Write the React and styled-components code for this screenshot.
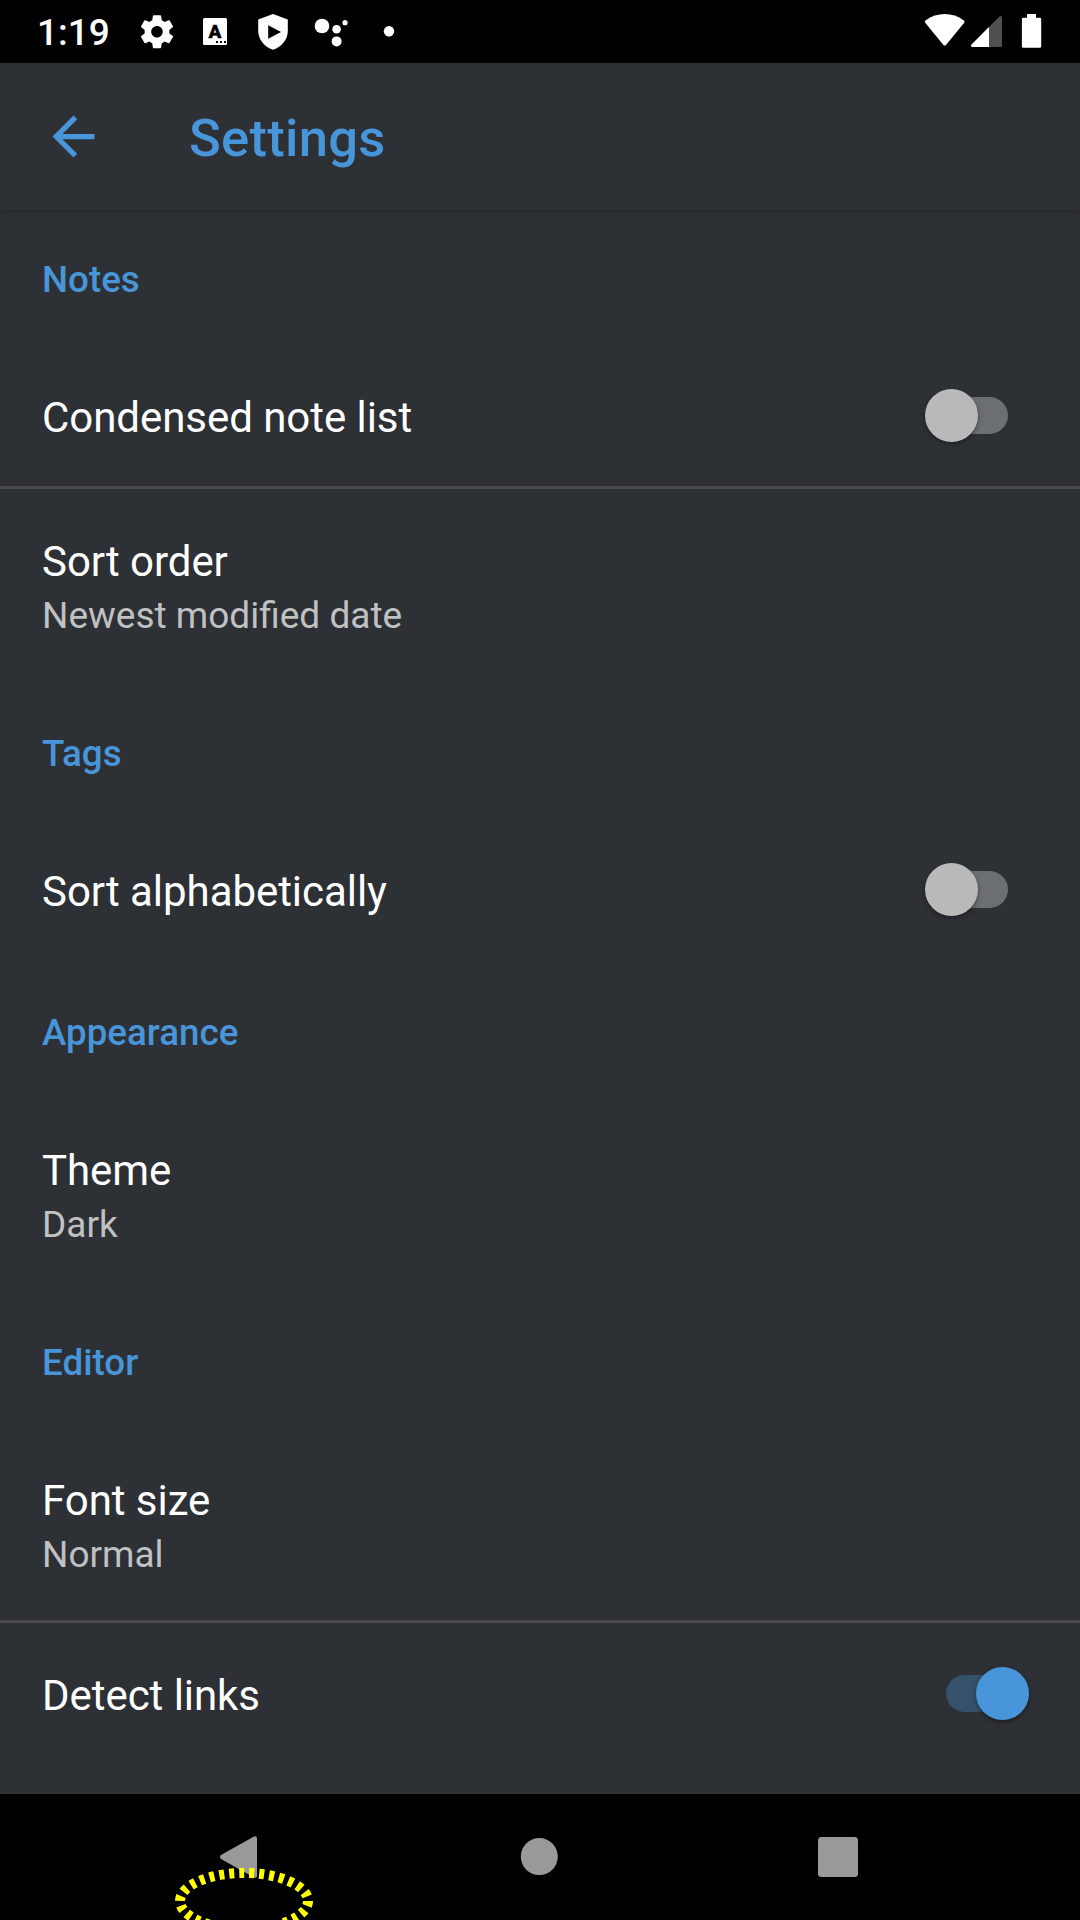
import React from "react";
import styled, { createGlobalStyle } from "styled-components";

const GlobalStyle = createGlobalStyle`
  *, *::before, *::after { box-sizing: border-box; }
  body {
    margin: 0;
    background: #000;
    overflow: hidden;
    font-family: Roboto, "Noto Sans", sans-serif;
  }
`;

const Screen = styled.div`
  position: relative;
  display: flex;
  flex-direction: column;
  width: 1080px;
  height: 1920px;
  overflow: hidden;
  background: #2d3035;
`;

const StatusBar = styled.header`
  flex: none;
  display: flex;
  height: 63px;
  background: #000;
  color: #fff;
`;

const Clock = styled.time`
  width: 128px;
  padding-left: 37px;
  font-size: 37px;
  font-weight: 500;
  line-height: 66px;
  white-space: nowrap;
`;

const StatusSlot = styled.svg`
  flex: none;
  display: block;
  width: ${(p) => p.$width || 58}px;
  height: 63px;
  fill: #fff;
`;

const SystemIcons = styled.div`
  display: flex;
  margin-left: auto;
  padding-right: 34px;
`;

const Toolbar = styled.div`
  flex: none;
  z-index: 1;
  display: flex;
  align-items: center;
  height: 147px;
  padding-left: 42px;
  background: #2d3035;
  box-shadow: 0 1px 5px rgba(0, 0, 0, 0.22);
`;

const BackArrow = styled.svg`
  width: 63px;
  height: 63px;
  fill: #4895d9;
`;

const Title = styled.h1`
  margin: 2px 0 0 84px;
  color: #4895d9;
  font-size: 52.5px;
  font-weight: 500;
  letter-spacing: 0.3px;
  line-height: 62px;
`;

const Preferences = styled.main`
  flex: 1;
  min-height: 0;
  overflow: hidden;
`;

const Category = styled.h2`
  height: 135px;
  margin: 0;
  padding: 4px 42px 0;
  color: #4895d9;
  font-size: 36.75px;
  font-weight: 500;
  line-height: 131px;
`;

const Row = styled.div`
  display: flex;
  align-items: center;
  height: ${(p) => (p.$tall ? 195 : 144)}px;
  padding: 0 51px 0 42px;
  border-bottom: 3px solid ${(p) => (p.$divider ? "#4a4b4f" : "transparent")};
`;

const RowText = styled.div`
  display: flex;
  flex-direction: column;
  flex: 1;
  gap: 8px;
  padding-top: 4px;
`;

const RowTitle = styled.div`
  color: #fff;
  font-size: 42px;
  letter-spacing: -0.05px;
  line-height: 49px;
`;

const RowSummary = styled.div`
  color: #c0c1c2;
  font-size: 37px;
  line-height: 43px;
`;

const SwitchBox = styled.div`
  display: flex;
  align-items: center;
  justify-content: ${(p) => (p.$on ? "flex-end" : "flex-start")};
  width: 104px;
  height: 53px;
`;

const Track = styled.div`
  flex: none;
  width: 62px;
  height: 37px;
  margin: ${(p) => (p.$on ? "0 -32px 0 0" : "0 0 0 -32px")};
  order: ${(p) => (p.$on ? 0 : 1)};
  border-radius: 19px;
  background: ${(p) => (p.$on ? "#36516a" : "#6b6f72")};
`;

const Thumb = styled.div`
  flex: none;
  z-index: 1;
  width: 53px;
  height: 53px;
  border-radius: 50%;
  order: ${(p) => (p.$on ? 1 : 0)};
  background: ${(p) => (p.$on ? "#4895d9" : "#b9b9b9")};
  box-shadow: 0 2px 4px rgba(0, 0, 0, 0.38);
`;

const NavBar = styled.nav`
  flex: none;
  display: flex;
  justify-content: center;
  height: 126px;
  background: #000;
`;

const NavIcon = styled.svg`
  width: 298px;
  height: 126px;
  fill: #999;
`;

const TouchMarker = styled.svg`
  position: absolute;
  left: 170px;
  bottom: 0;
  width: 148px;
  height: 60px;
  fill: none;
  stroke: #ff0;
  stroke-width: 10;
  stroke-dasharray: 5 5;
`;

const IconLetter = styled.text`
  font: 900 19px Roboto, sans-serif;
  fill: #000;
  stroke: #000;
  stroke-width: 0.3px;
  text-anchor: middle;
`;

function Switch({ on }) {
  return (
    <SwitchBox $on={on} role="switch" aria-checked={on}>
      <Track $on={on} />
      <Thumb $on={on} />
    </SwitchBox>
  );
}

function Preference({ title, summary, toggle, divider }) {
  return (
    <Row $tall={Boolean(summary)} $divider={divider}>
      <RowText>
        <RowTitle>{title}</RowTitle>
        {summary && <RowSummary>{summary}</RowSummary>}
      </RowText>
      {toggle !== undefined && <Switch on={toggle} />}
    </Row>
  );
}

const sections = [
  {
    name: "Notes",
    items: [
      { title: "Condensed note list", toggle: false, divider: true },
      { title: "Sort order", summary: "Newest modified date" },
    ],
  },
  { name: "Tags", items: [{ title: "Sort alphabetically", toggle: false }] },
  { name: "Appearance", items: [{ title: "Theme", summary: "Dark" }] },
  {
    name: "Editor",
    items: [
      { title: "Font size", summary: "Normal", divider: true },
      { title: "Detect links", toggle: true },
    ],
  },
];

export default function App() {
  return (
    <>
      <GlobalStyle />
      <Screen>
        <StatusBar>
          <Clock>1:19</Clock>
          <StatusSlot viewBox="0 0 58 63">
            <path
              transform="translate(9.2 11.9) scale(1.65)"
              d="M19.43 12.98c.04-.32.07-.64.07-.98s-.03-.66-.07-.98l2.11-1.65c.19-.15.24-.42.12-.64l-2-3.46c-.12-.22-.39-.3-.61-.22l-2.49 1c-.52-.4-1.08-.73-1.69-.98l-.38-2.65C14.46 2.18 14.25 2 14 2h-4c-.25 0-.46.18-.49.42l-.38 2.65c-.61.25-1.17.59-1.69.98l-2.49-1c-.23-.09-.49 0-.61.22l-2 3.46c-.13.22-.07.49.12.64l2.11 1.65c-.04.32-.07.65-.07.98s.03.66.07.98l-2.11 1.65c-.19.15-.24.42-.12.64l2 3.46c.12.22.39.3.61.22l2.49-1c.52.4 1.08.73 1.69.98l.38 2.65c.03.24.24.42.49.42h4c.25 0 .46-.18.49-.42l.38-2.65c.61-.25 1.17-.59 1.69-.98l2.49 1c.23.09.49 0 .61-.22l2-3.46c.12-.22.07-.49-.12-.64l-2.11-1.65zM12 15.5c-1.93 0-3.5-1.57-3.5-3.5s1.57-3.5 3.5-3.5 3.5 1.57 3.5 3.5-1.57 3.5-3.5 3.5z"
            />
          </StatusSlot>
          <StatusSlot viewBox="0 0 58 63">
            <rect x="17" y="18" width="24" height="27" rx="1.5" />
            <IconLetter x="29" y="38">A</IconLetter>
            <path fill="#000" d="M30 41h2v2h-2zM34 41h2v2h-2zM38 41h2v2h-2z" />
          </StatusSlot>
          <StatusSlot viewBox="0 0 58 63">
            <path d="M29 14L43.8 19.6V31C43.8 39 38 47 29 49.8C20 47 14.2 39 14.2 31V19.6Z" />
            <path fill="#000" d="M24.2 25.3L37 32L24.2 38.7Z" />
          </StatusSlot>
          <StatusSlot viewBox="0 0 58 63">
            <circle cx="20" cy="26" r="7.3" />
            <circle cx="34.6" cy="29.2" r="4.3" />
            <circle cx="43" cy="22.7" r="2.6" />
            <circle cx="34.6" cy="41.4" r="5" />
          </StatusSlot>
          <StatusSlot viewBox="0 0 58 63">
            <circle cx="29" cy="31.2" r="5.2" />
          </StatusSlot>
          <SystemIcons>
            <StatusSlot $width={46} viewBox="0 0 46 63">
              <path d="M1.2 22.8Q.2 21.5 1.5 20.4C13.4 12 28.2 12 39.9 20.4Q41.2 21.5 40.2 22.8L22.2 44.7Q20.7 46.5 19.2 44.7Z" />
            </StatusSlot>
            <StatusSlot $width={46} viewBox="0 0 46 63">
              <path
                fill="#505050"
                d="M2.5 47Q.3 46.5 1.3 44.7L29.5 16.5Q32 15 32 17.5V45.5Q32 47 30.5 47Z"
              />
              <path d="M19 27V47H2.5Q.3 46.5 1.3 44.7Z" />
            </StatusSlot>
            <StatusSlot $width={30} viewBox="0 0 30 63">
              <path d="M11 14h9v3.7h4q1.2 0 1.2 1.2v27.6q0 1.3-1.3 1.3H7.2q-1.3 0-1.3-1.3V18.9q0-1.2 1.2-1.2h3.9z" />
            </StatusSlot>
          </SystemIcons>
        </StatusBar>

        <Toolbar>
          <BackArrow viewBox="0 0 24 24">
            <path d="M20 11H7.83l5.59-5.59L12 4l-8 8 8 8 1.41-1.41L7.83 13H20v-2z" />
          </BackArrow>
          <Title>Settings</Title>
        </Toolbar>

        <Preferences>
          {sections.map((section) => (
            <section key={section.name}>
              <Category>{section.name}</Category>
              {section.items.map((item) => (
                <Preference key={item.title} {...item} />
              ))}
            </section>
          ))}
        </Preferences>

        <NavBar>
          <NavIcon viewBox="0 0 298 126">
            <path d="M128 65Q126 63 128 61L161 42.4Q164 41.5 164 44.5V81.5Q164 84.5 161 83.6Z" />
          </NavIcon>
          <NavIcon viewBox="0 0 298 126">
            <circle cx="148.3" cy="62.6" r="18.5" />
          </NavIcon>
          <NavIcon viewBox="0 0 298 126">
            <rect x="129" y="43" width="40" height="40" rx="3.5" />
          </NavIcon>
        </NavBar>

        <TouchMarker viewBox="0 0 148 60">
          <ellipse cx="74" cy="41" rx="64" ry="28" />
        </TouchMarker>
      </Screen>
    </>
  );
}
